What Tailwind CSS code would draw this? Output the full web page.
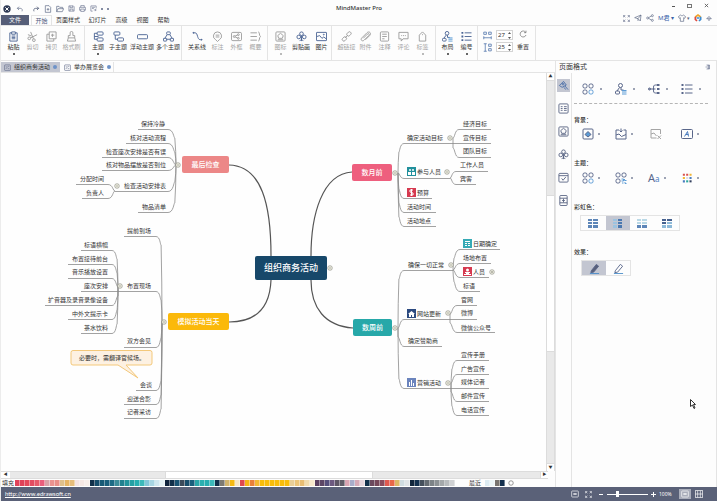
<!DOCTYPE html>
<html lang="zh-CN">
<head>
  <meta charset="UTF-8">
  <meta name="viewport" content="width=device-width, initial-scale=1.0">
  <title>MindMaster Pro</title>
  <script src="https://cdn.jsdelivr.net/npm/@tailwindcss/browser@4"></script>
</head>
<body class="bg-[#fdfdfd] fill-none stroke-2 text-[#333] text-[6px] leading-[8px] font-['Noto_Sans','Noto_Sans_CJK_SC',sans-serif]">

  <!-- Icon set -->
  <svg class="hidden">
    <symbol id="undo" viewBox="0 0 24 24"><path d="M9 5L4 10l5 5M4 10h9c5 0 7 4 5 9"/></symbol>
    <symbol id="redo" viewBox="0 0 24 24"><path d="M15 5l5 5-5 5M20 10h-9c-5 0-7 4-5 9"/></symbol>
    <symbol id="new" viewBox="0 0 24 24"><path d="M4 2h11l5 5v15H4zM12 9v8M8 13h8"/></symbol>
    <symbol id="open" viewBox="0 0 24 24"><path d="M2 20V4h7l2 3h9v4M2 20l4-9h17l-4 9z"/></symbol>
    <symbol id="save" viewBox="0 0 24 24"><path d="M3 3h15l3 3v15H3zM7 3v6h9V3M7 21v-7h10v7"/></symbol>
    <symbol id="print" viewBox="0 0 24 24"><path d="M6 8V2h12v6M6 18H2V8h20v10h-4M6 14h12v8H6z"/></symbol>
    <symbol id="export" viewBox="0 0 24 24"><path d="M9 21H3V3h18v9M7 8h10M7 12h6M13 17h8M18 14l3 3-3 4"/></symbol>
    <symbol id="paste" viewBox="0 0 24 24"><path d="M8 4H4v18h16V4h-4M8 2h8v5H8zM8 11h8M8 14h8M8 17h8"/></symbol>
    <symbol id="cut" viewBox="0 0 24 24"><circle cx="5" cy="16" r="3"/><circle cx="15" cy="20" r="3"/><path d="M8 15l14-7M14 17L8 2M2 8l8 3"/></symbol>
    <symbol id="copy" viewBox="0 0 24 24"><path d="M7 2h15v15H7zM7 7H2v15h15v-5M14 6v7M11 9h7"/></symbol>
    <symbol id="brush" viewBox="0 0 24 24"><path d="M9 10V4a3 3 0 016 0v6h4v5H5v-5zM5 15l-2 7h18l-2-7"/></symbol>
    <symbol id="topic" viewBox="0 0 24 24"><rect x="9" y="2" width="13" height="7" rx="2"/><rect x="9" y="15" width="13" height="7" rx="2"/><path d="M9 5H3v13h6M3 12h9"/></symbol>
    <symbol id="subtopic" viewBox="0 0 24 24"><rect x="2" y="2" width="13" height="7" rx="2"/><rect x="10" y="15" width="13" height="7" rx="2"/><path d="M5 9v9h5"/></symbol>
    <symbol id="float" viewBox="0 0 24 24"><rect x="1" y="8" width="22" height="9" rx="2"/></symbol>
    <symbol id="tree" viewBox="0 0 24 24"><rect x="8" y="2" width="8" height="6" rx="2"/><rect x="1" y="16" width="7" height="6" rx="1"/><rect x="16" y="16" width="7" height="6" rx="1"/><path d="M9 8l-5 8M15 8l5 8M8 18h8"/></symbol>
    <symbol id="relation" viewBox="0 0 24 24"><path d="M2 4h5c6 0 4 15 11 15h4"/><circle cx="3" cy="4" r="1"/><circle cx="21" cy="19" r="1"/></symbol>
    <symbol id="callout" viewBox="0 0 24 24"><path d="M12 2a9 9 0 014 17l-4 4-4-4a9 9 0 014-17zM8 9h8M8 13h8"/></symbol>
    <symbol id="frame" viewBox="0 0 24 24"><rect x="1" y="3" width="22" height="18" rx="3"/><circle cx="7" cy="12" r="2"/><circle cx="16" cy="8" r="2"/><circle cx="16" cy="16" r="2"/><path d="M9 11l5-2M9 13l5 2"/></symbol>
    <symbol id="summary" viewBox="0 0 24 24"><path d="M1 4h14M1 12h14M1 20h14M18 2c4 0 1 8 5 10-4 2-1 10-5 10"/></symbol>
    <symbol id="mark" viewBox="0 0 24 24"><rect x="2" y="2" width="20" height="20" rx="2"/><path d="M12 5l6 5-2 6H8l-2-6zM6 19h12"/></symbol>
    <symbol id="clip" viewBox="0 0 24 24"><circle cx="12" cy="6" r="4"/><circle cx="6" cy="13" r="4"/><circle cx="18" cy="13" r="4"/><path d="M12 10v12M8 21c3 0 4-3 4-5 0 2 1 5 4 5"/></symbol>
    <symbol id="image" viewBox="0 0 24 24"><rect x="1" y="3" width="22" height="18" rx="1"/><path d="M2 12l6-2 5 6 4-3 5 4"/><circle cx="17" cy="8" r="1"/></symbol>
    <symbol id="link" viewBox="0 0 24 24"><rect x="12" y="3" width="10" height="7" rx="3" transform="rotate(-45 17 6)"/><rect x="2" y="14" width="10" height="7" rx="3" transform="rotate(-45 7 17)"/><path d="M9 15l6-6"/></symbol>
    <symbol id="attach" viewBox="0 0 24 24"><path d="M7 16l9-9c3-3 6 0 3 3L9 20c-4 4-9-1-5-5L15 4c5-5 11 1 6 6L12 19"/></symbol>
    <symbol id="note" viewBox="0 0 24 24"><rect x="3" y="2" width="18" height="20" rx="2"/><path d="M7 7h10M7 12h10M7 17h5"/></symbol>
    <symbol id="comment" viewBox="0 0 24 24"><path d="M2 3h20v14H11l-4 5v-5H2zM7 10h2M11 10h2M15 10h2"/></symbol>
    <symbol id="tag" viewBox="0 0 24 24"><path d="M12 2l7 7v13H5V9zM12 7v2"/></symbol>
    <symbol id="layout" viewBox="0 0 24 24"><circle cx="11" cy="5" r="4"/><path d="M9 9l-5 7M12 9v5h5"/><rect x="1" y="16" width="8" height="6" rx="2"/><path stroke="#5b9bd5" d="M14 15h9M14 18h9M14 22h9"/></symbol>
    <symbol id="list" viewBox="0 0 24 24"><path d="M8 4h15M8 12h15M8 20h15"/><path stroke-width="4" d="M1 4h4M1 12h4M1 20h4"/></symbol>
    <symbol id="hspace" viewBox="0 0 24 24"><path d="M2 3h7v6H2zM15 3h7v6h-7zM2 18h20M2 14v8M22 14v8"/></symbol>
    <symbol id="vspace" viewBox="0 0 24 24"><path d="M2 2h8M6 2v20M2 22h8M15 3h7v6h-7zM15 15h7v6h-7z"/></symbol>
    <symbol id="reset" viewBox="0 0 24 24"><path d="M20 7a9 9 0 101 8M21 2v6h-6"/></symbol>
    <symbol id="full" viewBox="0 0 24 24"><path d="M2 8V2h6M16 2h6v6M22 16v6h-6M8 22H2v-6M2 2l6 6M22 2l-6 6M22 22l-6-6M2 22l6-6"/></symbol>
    <symbol id="send" viewBox="0 0 24 24"><path d="M2 11L21 3l-2 18-7-7zM12 14l9-11M12 14v7"/></symbol>
    <symbol id="share" viewBox="0 0 24 24"><circle cx="5" cy="12" r="3"/><circle cx="19" cy="5" r="3"/><circle cx="19" cy="19" r="3"/><path d="M8 11l8-5M8 13l8 5"/></symbol>
    <symbol id="shirt" viewBox="0 0 24 24"><path d="M8 3L1 8l3 5 3-2v11h10V11l3 2 3-5-7-5c-2 3-6 3-8 0z"/></symbol>
    <symbol id="shapes" viewBox="0 0 24 24"><rect x="2" y="2" width="8" height="8" rx="3"/><rect x="14" y="2" width="8" height="8" rx="3"/><rect x="2" y="14" width="8" height="8" rx="3"/><rect x="14" y="14" width="8" height="8" rx="3" stroke="#5b9bd5"/></symbol>
    <symbol id="themes" viewBox="0 0 24 24"><rect x="2" y="2" width="8" height="8" rx="3"/><rect x="14" y="2" width="8" height="8" rx="3"/><rect x="2" y="14" width="8" height="8" rx="3"/><path stroke="#5b9bd5" d="M13 14h4v4h-4M19 14v3h4M14 22h3M20 20v3h3"/></symbol>
    <symbol id="branch" viewBox="0 0 24 24"><path d="M1 12h14M22 4h-7c-4 0-4 2-4 8s0 8 4 8h7"/><circle cx="3" cy="12" r="2"/><path stroke-width="4" d="M18 4h5M18 12h5M18 20h5"/></symbol>
    <symbol id="fill" viewBox="0 0 24 24"><rect x="2" y="2" width="20" height="20" rx="2"/><path fill="#5b9bd5" d="M6 13l6-6 6 6-6 5z"/></symbol>
    <symbol id="bgimage" viewBox="0 0 24 24"><path d="M8 4H2v18h20V4h-5M2 14l6-2 5 5 9-4M12 1v7M9 5l3 3 3-3"/></symbol>
    <symbol id="noimage" viewBox="0 0 24 24"><path d="M13 20H2V3h19v9M2 12l6-2 5 6M15 15l7 7M22 15l-7 7"/></symbol>
    <symbol id="watermark" viewBox="0 0 24 24"><rect x="1" y="3" width="22" height="18" rx="2"/><path stroke="#4a7cc0" d="M7 17l6-10 2 10M10 13h5"/></symbol>
    <symbol id="palette" viewBox="0 0 24 24"><path stroke="#d9534f" stroke-width="5" d="M2 4h5M10 4h5"/><path stroke="#f2b632" stroke-width="5" d="M18 4h5M2 12h5"/><path stroke="#d8dce6" stroke-width="5" d="M10 12h5"/><path stroke="#4a7cc0" stroke-width="5" d="M18 12h5M2 20h5"/><path stroke="#2aa79b" stroke-width="5" d="M10 20h5"/><path stroke="#34405f" stroke-width="5" d="M18 20h5"/></symbol>
    <symbol id="format" viewBox="0 0 24 24"><path d="M3 12L12 3l6 8-9 5zM15 13l7 8M13 16l4 5"/><circle cx="11" cy="9" r="2"/></symbol>
    <symbol id="outline" viewBox="0 0 24 24"><rect x="2" y="2" width="20" height="20" rx="2"/><path d="M6 8h4M13 8h6M6 12h4M13 12h6M6 16h4M13 16h6"/></symbol>
    <symbol id="task" viewBox="0 0 24 24"><rect x="2" y="3" width="20" height="19" rx="2"/><path d="M2 8h20M8 14l3 4 6-7"/></symbol>
    <symbol id="book" viewBox="0 0 24 24"><rect x="4" y="1" width="16" height="22" rx="2"/><path d="M4 7h16M4 17h16M12 8v8M9 12h6"/></symbol>
    <symbol id="doc" viewBox="0 0 24 24"><rect x="2" y="3" width="20" height="19" rx="2"/><path d="M6 8l5 4-5 5M12 8h6M13 16h5"/></symbol>
    <symbol id="dock" viewBox="0 0 24 24"><path d="M6 4h12v16H6M12 4v16M15 4v16M2 12h6"/></symbol>
    <symbol id="pen" viewBox="0 0 24 24"><path d="M5 17L16 3l5 4L10 20l-6 1z"/><path stroke="#4a8cc8" d="M2 23h20"/></symbol>
    <symbol id="screen" viewBox="0 0 24 24"><rect x="2" y="3" width="20" height="18" rx="2"/><path stroke-width="4" d="M7 12h10"/></symbol>
  </svg>

  <div class="flex flex-col h-screen overflow-hidden border-l border-[#ececec]">

    <!-- Title bar -->
    <header class="relative flex h-[15px] shrink-0 items-center justify-between pl-[2px] pr-[8px] pt-[2px] text-[#5b6684]">
      <div class="flex items-center gap-[4px]">
        <svg class="mr-px size-[8px]" viewBox="0 0 24 24"><circle cx="12" cy="12" r="11" fill="#2f3a55"/><path d="M7 7l10 10M17 7L7 17" stroke="#fff" stroke-width="3"/></svg>
        <button aria-label="撤销"><svg class="mr-[4px] size-[8px] stroke-current"><use href="#undo"/></svg></button>
        <button aria-label="重做"><svg class="size-[8px] stroke-[#34405f]"><use href="#redo"/></svg></button>
        <button aria-label="新建"><svg class="size-[8px] stroke-current"><use href="#new"/></svg></button>
        <button aria-label="打开"><svg class="size-[8px] stroke-current"><use href="#open"/></svg></button>
        <button aria-label="保存"><svg class="size-[7px] stroke-current"><use href="#save"/></svg></button>
        <button aria-label="打印"><svg class="size-[7px] stroke-current"><use href="#print"/></svg></button>
        <button aria-label="导出"><svg class="size-[7px] stroke-current"><use href="#export"/></svg></button>
        <span class="size-[2px] rounded-full bg-[#5b6684]"></span>
        <span class="size-[2px] rounded-full bg-[#5b6684]"></span>
      </div>
      <h1 class="absolute inset-x-0 top-[4px] text-center font-medium text-[#333]">MindMaster Pro</h1>
      <div class="relative flex items-center gap-[12px] pb-[6px]">
        <button aria-label="最小化" class="mt-[2px] h-px w-[3px] bg-[#555]"></button>
        <button aria-label="最大化" class="h-[4px] w-[5px] border border-[#777]"></button>
        <button aria-label="关闭"><svg class="size-[5px] stroke-[#555] stroke-1" viewBox="0 0 6 6"><path d="M1 1l4 4M5 1L1 5"/></svg></button>
      </div>
    </header>

    <!-- Menu tabs -->
    <nav class="flex h-[11px] shrink-0 items-stretch border-b border-[#e4e4e4]">
      <button class="w-[28px] bg-[#565e78] text-white">文件</button>
      <button class="ml-[2px] w-[21px] border-x border-t border-[#e4e4e4] text-[#4e5a7c]">开始</button>
      <button class="w-[32px]">页面样式</button>
      <button class="w-[27px]">幻灯片</button>
      <button class="w-[21px]">高级</button>
      <button class="w-[21px]">视图</button>
      <button class="w-[21px]">帮助</button>
      <div class="ml-auto flex items-center gap-[4px] pr-[5px] pb-[4px] text-[#5b6684]">
        <button aria-label="全屏"><svg class="size-[7px] stroke-current"><use href="#full"/></svg></button>
        <button aria-label="发送"><svg class="size-[8px] stroke-current"><use href="#send"/></svg></button>
        <button aria-label="分享"><svg class="size-[8px] stroke-current"><use href="#share"/></svg></button>
        <button class="text-[#3a62a8]">M君 ▾</button>
        <button aria-label="皮肤" class="flex"><svg class="size-[8px] stroke-current"><use href="#shirt"/></svg><span class="ml-px text-[5px] leading-[8px]">▾</span></button>
        <svg class="size-[8px]" viewBox="0 0 24 24" stroke-width="5"><path stroke="#f0a52c" d="M4 9l8-6 8 6"/><path stroke="#df4a3e" d="M4 8v8l5 5"/><path stroke="#3c8bd0" d="M20 8v8l-5 5M8 12h8"/></svg>
        <button aria-label="折叠"><svg class="size-[6px] stroke-current" viewBox="0 0 24 24" stroke-width="3"><path d="M3 15l9-9 9 9zM8 20h8"/></svg></button>
      </div>
    </nav>

    <!-- Ribbon -->
    <div id="ribbon" class="flex h-[35px] shrink-0 border-b border-[#e4e4e4]"></div>

    <div class="flex min-h-0 flex-1">
      <main class="flex min-w-0 flex-1 flex-col">
        <!-- Open documents -->
        <div class="flex h-[12px] shrink-0 items-stretch border-b border-[#e4e4e4] pt-px">
          <button class="flex w-[59px] items-center gap-[3px] bg-[#c3c6d1] pl-[3px]"><svg class="size-[7px] stroke-[#5b6684]"><use href="#doc"/></svg>组织商务活动<span class="size-[4px] rounded-full bg-[#6e93c8]"></span></button>
          <button class="flex w-[54px] items-center gap-[3px] border-r border-[#e4e4e4] pl-[4px]"><svg class="size-[7px] stroke-[#5b6684]"><use href="#doc"/></svg>举办展览会<span class="size-[4px] rounded-full bg-[#6e93c8]"></span></button>
        </div>

        <div class="flex min-h-0 flex-1">
          <!-- Mind map canvas -->
          <div id="canvas" class="relative min-w-0 flex-1 overflow-hidden bg-[#fefefe]">
            <svg id="lines" class="absolute inset-0 h-full w-full"></svg>
          </div>
          <!-- Vertical scrollbar -->
          <div class="flex w-[9px] shrink-0 flex-col border-x border-[#dcdcdc] bg-[#e9e9e9]">
            <button aria-label="向上" class="h-[8px] border-b border-[#dcdcdc] bg-white text-[4px] leading-[6px]">▲</button>
            <div class="grow-[115]"></div>
            <div class="grow-[156] border-y border-[#dcdcdc] bg-white"></div>
            <div class="grow-[112]"></div>
            <button aria-label="向下" class="h-[8px] border-t border-[#dcdcdc] bg-white text-[4px] leading-[6px]">▼</button>
          </div>
        </div>

        <!-- Horizontal scrollbar -->
        <div class="mr-[7px] flex h-[8px] shrink-0 border-y border-[#dcdcdc] bg-[#e9e9e9]">
          <button aria-label="向左" class="w-[9px] bg-white text-[4px] leading-[6px]">◀</button>
          <div class="grow-[156]"></div>
          <div class="grow-[206] border-x border-[#dcdcdc] bg-white"></div>
          <div class="grow-[168]"></div>
          <button aria-label="向右" class="w-[8px] border-l border-[#dcdcdc] bg-white text-[4px] leading-[6px]">▶</button>
        </div>

        <!-- Colour strip -->
        <div class="flex h-[8px] shrink-0 items-center pl-px">
          <span class="w-[13px]">填充</span>
          <div id="swatches" class="flex h-[6px]"></div>
          <span class="ml-[14px] w-[16px]">最近</span>
          <div id="recent" class="flex h-[6px]"></div>
          <svg class="ml-[3px] size-[6px] stroke-[#777]" viewBox="0 0 24 24" stroke-width="3"><circle cx="12" cy="12" r="9"/></svg>
        </div>
      </main>

      <!-- Page format panel -->
      <aside class="flex w-[162px] shrink-0 flex-col border-x border-[#e4e4e4]">
        <div class="flex h-[12px] items-center justify-between pl-[3px] pr-[5px]">
          <h2 class="text-[7px]">页面格式</h2>
          <button aria-label="停靠"><svg class="size-[6px] stroke-[#4e5a7c]"><use href="#dock"/></svg></button>
        </div>
        <div class="flex flex-1">
          <div class="flex w-[16px] flex-col items-center gap-[10px] border-r border-[#e4e4e4] pt-[6px] text-[#5b6684]">
            <button aria-label="页面格式" class="flex size-[13px] items-center justify-center bg-[#c3c6d1]"><svg class="size-[11px] stroke-[#4a6fa8]"><use href="#format"/></svg></button>
            <button aria-label="大纲" class="flex size-[13px] items-center justify-center"><svg class="size-[11px] stroke-current"><use href="#outline"/></svg></button>
            <button aria-label="图标" class="flex size-[13px] items-center justify-center"><svg class="size-[11px] stroke-current"><use href="#mark"/></svg></button>
            <button aria-label="剪贴画" class="flex size-[13px] items-center justify-center"><svg class="size-[11px] stroke-current"><use href="#clip"/></svg></button>
            <button aria-label="任务" class="flex size-[13px] items-center justify-center"><svg class="size-[11px] stroke-current"><use href="#task"/></svg></button>
            <button aria-label="符号" class="flex size-[13px] items-center justify-center"><svg class="size-[11px] stroke-current"><use href="#book"/></svg></button>
          </div>
          <div class="flex-1 pl-[2px] pr-[2px] pt-[10px] text-[#59668a]">
            <div class="grid h-[20px] grid-cols-4 pl-[8px]">
              <button aria-label="形状" class="flex gap-[6px]"><svg class="size-[12px] stroke-current"><use href="#shapes"/></svg><i class="mt-[5px] size-[2px] rounded-full bg-[#7d859b]"></i></button>
              <button aria-label="布局" class="flex gap-[6px]"><svg class="size-[12px] stroke-current"><use href="#layout"/></svg><i class="mt-[5px] size-[2px] rounded-full bg-[#7d859b]"></i></button>
              <button aria-label="分支" class="flex gap-[6px]"><svg class="size-[12px] stroke-current"><use href="#branch"/></svg><i class="mt-[5px] size-[2px] rounded-full bg-[#7d859b]"></i></button>
              <button aria-label="编号" class="flex gap-[6px]"><svg class="size-[12px] stroke-current"><use href="#list"/></svg><i class="mt-[5px] size-[2px] rounded-full bg-[#7d859b]"></i></button>
            </div>
            <div class="mr-[6px] border-t border-dashed border-[#b5b5b5]"></div>

            <h3 class="mt-[12px] font-medium text-[#333]">背景：</h3>
            <div class="mt-[4px] grid grid-cols-4 pl-[8px]">
              <button aria-label="背景颜色" class="flex gap-[4px]"><svg class="size-[12px] stroke-current"><use href="#fill"/></svg><i class="mt-[5px] size-[2px] rounded-full bg-[#7d859b]"></i></button>
              <button aria-label="背景图片" class="flex gap-[4px]"><svg class="size-[12px] stroke-current"><use href="#bgimage"/></svg><i class="mt-[5px] size-[2px] rounded-full bg-[#7d859b]"></i></button>
              <button aria-label="移除图片" class="flex pl-[2px] text-[#a5a5a5]"><svg class="size-[12px] stroke-current"><use href="#noimage"/></svg></button>
              <button aria-label="水印" class="flex gap-[4px]"><svg class="size-[12px] stroke-current"><use href="#watermark"/></svg><i class="mt-[5px] size-[2px] rounded-full bg-[#7d859b]"></i></button>
            </div>

            <h3 class="mt-[19px] font-medium text-[#333]">主题：</h3>
            <div class="mt-[5px] grid grid-cols-4 pl-[8px]">
              <button aria-label="主题样式" class="flex gap-[4px]"><svg class="size-[12px] stroke-current"><use href="#shapes"/></svg><i class="mt-[5px] size-[2px] rounded-full bg-[#7d859b]"></i></button>
              <button aria-label="主题颜色" class="flex gap-[4px]"><svg class="size-[12px] stroke-current"><use href="#themes"/></svg><i class="mt-[5px] size-[2px] rounded-full bg-[#7d859b]"></i></button>
              <button aria-label="主题字体" class="flex gap-[4px]"><span class="text-[11px] leading-[12px]">A<span class="text-[8px] text-[#4a7cc0]">a</span></span><i class="mt-[5px] size-[2px] rounded-full bg-[#7d859b]"></i></button>
              <button aria-label="配色" class="flex gap-[5px] pl-px"><svg class="mt-px size-[10px]"><use href="#palette"/></svg><i class="mt-[5px] size-[2px] rounded-full bg-[#7d859b]"></i></button>
            </div>

            <h3 class="mt-[18px] font-medium text-[#333]">彩虹色：</h3>
            <div class="ml-[6px] mt-[4px] flex h-[16px] w-[100px] border border-[#e4e4e4]">
              <button aria-label="彩虹色 1" class="flex flex-1 items-center justify-center"><svg class="h-[9px] w-[10px]" viewBox="0 0 10 9" fill="#5d86b8"><path fill="#5d86b8" d="M0 0h4v2H0zM5 0h5v2H5zM0 3h4v2H0zM5 3h5v2H5zM0 6h4v3H0zM5 6h5v3H5z"/></svg></button>
              <button aria-label="彩虹色 2" class="flex flex-1 items-center justify-center bg-[#c3c6d1]"><svg class="h-[9px] w-[10px]" viewBox="0 0 10 9"><path fill="#9cc3e0" d="M0 0h4v2H0zM0 3h4v2H0zM0 6h4v3H0z"/><path fill="#4a78b0" d="M5 0h4v2H5zM5 3h4v2H5zM5 6h4v3H5z"/></svg></button>
              <button aria-label="彩虹色 3" class="flex flex-1 items-center justify-center"><svg class="h-[9px] w-[10px]" viewBox="0 0 10 9"><path fill="#b9d8e6" d="M0 0h4v2H0zM5 0h5v2H5zM0 3h4v2H0zM5 3h5v2H5z"/><path fill="#5d86b8" d="M0 6h4v3H0zM5 6h5v3H5z"/></svg></button>
              <button aria-label="彩虹色 4" class="flex flex-1 items-center justify-center"><svg class="h-[9px] w-[10px]" viewBox="0 0 10 9"><path fill="#46618f" d="M0 0h4v2H0zM5 0h5v2H5zM0 3h4v2H0z"/><path fill="#8db9d8" d="M5 3h5v2H5zM0 6h4v3H0zM5 6h5v3H5z"/></svg></button>
            </div>

            <h3 class="mt-[17px] font-medium text-[#333]">效果：</h3>
            <div class="ml-[7px] mt-[4px] flex h-[16px] w-[50px] border border-[#e4e4e4]">
              <button aria-label="普通" class="flex flex-1 items-center justify-center bg-[#c3c6d1]"><svg class="size-[11px] fill-[#59607a] stroke-current"><use href="#pen"/></svg></button>
              <button aria-label="手绘" class="flex flex-1 items-center justify-center"><svg class="size-[11px] stroke-current"><use href="#pen"/></svg></button>
            </div>
          </div>
        </div>
      </aside>
    </div>

    <!-- Status bar -->
    <footer class="flex h-[14px] shrink-0 items-center justify-between bg-[#5a6178] pl-[4px] pr-[14px] text-white">
      <a href="http://www.edrawsoft.cn" class="font-['Lato',sans-serif] underline">http://www.edrawsoft.cn</a>
      <div class="flex items-center">
        <button aria-label="演示"><svg class="size-[8px] stroke-white"><use href="#screen"/></svg></button>
        <button aria-label="全屏" class="ml-[6px]"><svg class="size-[7px] stroke-white"><use href="#full"/></svg></button>
        <button aria-label="缩小" class="ml-[7px] h-px w-[4px] bg-white"></button>
        <input type="range" aria-label="缩放" min="0" max="100" value="24" class="ml-[4px] h-[7px] w-[41px] appearance-none bg-linear-to-r from-white to-white bg-[length:100%_1px] bg-center bg-no-repeat [&::-webkit-slider-thumb]:h-[6px] [&::-webkit-slider-thumb]:w-[3px] [&::-webkit-slider-thumb]:appearance-none [&::-webkit-slider-thumb]:bg-white">
        <button aria-label="放大" class="ml-[3px]"><svg class="size-[5px] stroke-white stroke-1" viewBox="0 0 5 5"><path d="M0 2.5h5M2.5 0v5"/></svg></button>
        <span class="ml-[3px] w-[20px] text-[5px]">100%</span>
        <button aria-label="适合页面" class="flex h-[10px] w-[12px] items-center justify-center bg-[#a9adba]"><svg class="size-[8px] stroke-white"><use href="#screen"/></svg></button>
        <button aria-label="适合窗口" class="ml-[4px]"><svg class="size-[8px] stroke-white" viewBox="0 0 24 24"><rect x="1" y="2" width="22" height="20"/><path d="M8 2v20M16 2v20M1 12h22"/></svg></button>
      </div>
    </footer>
  </div>

  <svg class="pointer-events-none absolute left-[690px] top-[399px] h-[10px] w-[6px]" viewBox="0 0 12 20"><path d="M1 1v14l4-3 3 7 2-1-3-7h4z" fill="#fff" stroke="#333" stroke-width="2"/></svg>

  <script>
    // Ribbon groups: [icon, label, width class, enabled, has drop-down]
    const groups = [
      ['w-[84px] pl-[3px]', [['paste', '粘贴', 'w-[19px]', 1, 1], ['cut', '剪切', 'w-[19px]', 0, 0], ['copy', '拷贝', 'w-[19px]', 0, 0], ['brush', '格式刷', 'w-[21px]', 0, 0]]],
      ['w-[97px] pl-[4px]', [['topic', '主题', 'w-[18px]', 1, 1], ['subtopic', '子主题', 'w-[22px]', 1, 0], ['float', '浮动主题', 'w-[26px]', 1, 0], ['tree', '多个主题', 'w-[26px]', 1, 0]]],
      ['w-[86px] pl-[4px]', [['relation', '关系线', 'w-[22px]', 1, 0], ['callout', '标注', 'w-[19px]', 0, 0], ['frame', '外框', 'w-[19px]', 0, 0], ['summary', '概要', 'w-[19px]', 0, 0]]],
      ['w-[64px] pl-[3px]', [['mark', '图标', 'w-[19px]', 0, 1], ['clip', '剪贴画', 'w-[22px]', 1, 0], ['image', '图片', 'w-[19px]', 1, 0]]],
      ['w-[104px] pl-[5px]', [['link', '超链接', 'w-[19px]', 0, 0], ['attach', '附件', 'w-[19px]', 0, 0], ['note', '注释', 'w-[19px]', 0, 0], ['comment', '评论', 'w-[19px]', 0, 0], ['tag', '标签', 'w-[19px]', 0, 1]]],
      ['w-[42px] pl-[2px]', [['layout', '布局', 'w-[19px]', 1, 1], ['list', '编号', 'w-[19px]', 1, 1]]]
    ];
    const spin = (icon, label, value) => `
      <label class="flex items-center gap-[4px]"><svg class="size-[9px] stroke-[#4a6fa8]"><use href="#${icon}"/></svg>
        <span class="flex h-[10px] w-[17px] items-center border border-[#d4d4d4] bg-white"><input type="text" aria-label="${label}" value="${value}" class="w-[11px] pl-px text-[6px] leading-[8px]">
        <svg class="h-[7px] w-[3px]" viewBox="0 0 3 7"><path fill="#555" d="M0 2l1.500-2L3 2zM0 5h3L1.500 7z"/></svg></span></label>`;
    document.getElementById('ribbon').innerHTML = groups.map(([cls, items]) => `
      <div class="flex shrink-0 border-r border-[#e4e4e4] pt-[5px] ${cls}">${items.map(([icon, text, w, on, drop]) => `
        <button class="flex flex-col items-center whitespace-nowrap ${w} ${on ? 'text-[#333]' : 'text-[#a3a3a3]'}">
          <svg class="size-[11px] ${on ? 'stroke-[#4a6494]' : 'stroke-[#9b9b9b]'}"><use href="#${icon}"/></svg>
          <span class="mt-px">${text}</span>${drop ? '<i class="mt-[2px] size-[2px] rounded-full bg-current"></i>' : ''}
        </button>`).join('')}</div>`).join('') + `
      <div class="flex w-[58px] shrink-0 border-r border-[#e4e4e4] pl-[5px]">
        <div class="flex flex-col gap-[2px] pt-[4px]">${spin('hspace', '水平间距', 27)}${spin('vspace', '垂直间距', 25)}</div>
        <button class="flex w-[20px] flex-col items-center gap-[5px] pt-[4px]"><svg class="size-[8px] stroke-[#666]"><use href="#reset"/></svg>重置</button>
      </div>`;

    // Colour strip
    const colors = 'e0435a e0435a e5495c e24d62 e65a6b ea5f7d d9a2a8 ea9390 e98f88 e0c08c e7b565 e6bd7c f4e3e3 f6e8e4 f8eeea 12304a 174d6b 185a76 1a5f7c 1d6b85 3c8c99 22818f 23949c 25a0a4 27aeb0 3db9ba 84c6d8 a8d5e2 cfe6ee e4f1f4 10243c 12304a 1a5372 3b4a5a 174d6b 1a5f7c 2aa6a8 2bb0b0 27aeb0 3db9ba 12304a 7d7a72 d2b46c f6b912 f7e6c4 e0494e f6b515 e8803a f3b932 f9bd0c f9bd0c f9bd0c f9bd0c f9bd0c f9bd0c e9cf98 ecc57a e8be74 f1dcae f7e9cc 5a4060 5d4766 57507c 6d5a80 5f5766 625e68 dba6b3 a9adca d6a9b6 e5d5dc 12304a 6b4a5e 76485a 8a4b5c e0594f e86848 dcb865 cfdbe0 dfe3e6 12263c 14304e 46505c 666c72 7d8387 8c9194 a4a8aa b8bbbd cfd1d3'.split(' ');
    const swatch = c => `<button aria-label="#${c}" class="w-[5px] border-r border-white/40" style="background:#${c}"></button>`;
    document.getElementById('swatches').innerHTML = colors.map(swatch).join('');
    document.getElementById('recent').innerHTML = ['dcebf2', 'eaf4f7', '77736f', '14304e'].map(swatch).join('');

    // Canvas coordinates are window based, the canvas starts at this offset
    const OX = 1, OY = 73;
    const canvas = document.getElementById('canvas');
    const lines = document.getElementById('lines');
    let svg = '', html = '';

    // Topics: [text, text x, text centre y, line y, line outer x, icon]
    // Each branch: [join x, join y, end of straight line x, topics]
    const branches = [
      [176, 165, 168, [['保持冷静', 141, 124, 129, 138], ['核对活动流程', 130, 138, 143, 126], ['检查座次安排是否有误', 106, 152, 157, 102], ['核对物品摆放是否到位', 106, 165, 170, 102], ['检查活动安排表', 124, 186, 191, 115], ['物品清单', 142, 207, 212, 138]]],
      [115, 191, 108, [['分配时间', 80, 179, 184, 76], ['负责人', 86, 193, 198, 82]]],
      [162, 321, 156, [['提前到场', 127, 231, 236, 124], ['布置现场', 127, 286, 291, 118], ['双方会见', 127, 341, 347, 124], ['会谈', 140, 385, 390, 136], ['迎送合影', 127, 399, 404, 124], ['记者采访', 127, 412, 418, 124]]],
      [118, 291, 112, [['标语横幅', 84, 245, 250, 81], ['布置接待前台', 72, 259, 264, 68], ['音乐播放设置', 72, 272, 278, 68], ['座次安排', 84, 286, 291, 81], ['扩音器及录音录像设备', 48, 300, 305, 45], ['中外文提示卡', 72, 314, 319, 68], ['茶水饮料', 84, 328, 333, 81]]],
      [398, 173, 404, [['确定活动目标', 407, 138, 143, 453], ['参与人员', 417, 172, 178, 450, 'people'], ['预算', 417, 193, 198, 432, 'money'], ['活动时间', 407, 207, 212, 436], ['活动地点', 407, 221, 226, 436]]],
      [453, 143, 459, [['经济目标', 463, 124, 129, 491], ['宣传目标', 463, 138, 143, 491], ['团队目标', 463, 151, 157, 491]]],
      [450, 178, 456, [['工作人员', 460, 165, 171, 488], ['宾客', 460, 179, 184, 476]]],
      [398, 328, 404, [['确保一切正常', 408, 265, 270, 453], ['网站更新', 417, 314, 319, 450, 'home'], ['确定赞助商', 408, 341, 346, 442], ['营销活动', 417, 383, 388, 451, 'chart']]],
      [453, 270, 460, [['日期确定', 473, 244, 249, 500, 'calendar'], ['场地布置', 463, 258, 263, 491], ['人员', 473, 272, 277, 489, 'person'], ['标语', 463, 286, 291, 480]]],
      [450, 319, 457, [['官网', 461, 300, 305, 477], ['微博', 461, 313, 319, 477], ['微信公众号', 461, 328, 332, 495]]],
      [451, 388, 457, [['宣传手册', 461, 355, 360, 489], ['广告宣传', 461, 369, 374, 489], ['媒体记者', 461, 382, 388, 489], ['邮件宣传', 461, 396, 401, 489], ['电话宣传', 461, 410, 415, 489]]]
    ];
    const icons = {
      people: ['#22909c', '<circle cx="3" cy="3" r="1"/><circle cx="6" cy="3" r="1"/><path d="M1 8V5h3v3zM5 8V5h3v3z"/>'],
      money: ['#d63a50', '<path d="M6 2H3v2l3 1v2H3M4.500 1v7" fill="none" stroke="#fff" stroke-width="1"/>'],
      home: ['#2c4a80', '<path d="M1 5l3.500-3L8 5H7v3H5V6H4v2H2V5z"/>'],
      chart: ['#6b84bd', '<path d="M2 4h1v4H2zM4 2h1v6H4zM6 5h1v3H6z"/>'],
      calendar: ['#36aab5', '<path d="M2 2h5v1H2zM2 4h2v1H2zM5 4h2v1H5zM2 6h2v1H2zM5 6h2v1H5z"/>'],
      person: ['#d63a50', '<circle cx="4.500" cy="3" r="1.500"/><path d="M2 5h5v1H6v1h2v1H1V7h2V6H2z"/>']
    };
    branches.forEach(([jx, jy, sx, topics]) => topics.forEach(([text, tx, cy, ly, ox, icon]) => {
      const dy = Math.abs(jy - ly), r = Math.min(9, dy) * Math.sign(jy - ly);
      const mid = sx + (jx - sx) * 0.7;
      svg += dy < 1
        ? `<path d="M${ox} ${ly}.500H${jx}"/>`
        : `<path d="M${ox} ${ly}.500H${sx}C${mid} ${ly}.500 ${mid} ${ly + r} ${dy > 20 ? (jx + mid) / 2 : jx} ${ly + r}Q${jx} ${(ly + r + jy) / 2} ${jx} ${jy}"/>`;
      html += `<span class="absolute whitespace-nowrap leading-[8px]" style="left:${tx - OX}px;top:${cy - 4 - OY}px">${text}</span>`;
      if (icon) html += `<svg class="absolute size-[9px] fill-white" viewBox="0 0 9 9" style="left:${tx - 10 - OX}px;top:${cy - 5 - OY}px"><rect width="9" height="9" fill="${icons[icon][0]}"/>${icons[icon][1]}</svg>`;
    }));

    // Links from the central topic
    const links = ['M229 165C262 166 271 205 271 256', 'M229 322C258 322 270 305 271 280', 'M352 172C322 174 311 215 311 256', 'M353 328C325 326 311 308 311 280'];
    const callout = '<path d="M73 350.500H150a2 2 0 012 2V363a2 2 0 01-2 2H126L138 378 118 365H73a2 2 0 01-2-2V352.500a2 2 0 012-2z" fill="#fdf1e2" stroke="#f3c87a" stroke-width="1"/>';
    const toggles = [[178, 165], [117, 186], [164, 322], [120, 286], [330, 268], [395, 173], [450, 138], [447, 172], [395, 328], [451, 265], [448, 313], [448, 383], [492, 272, 1]];
    lines.innerHTML = `<g transform="translate(${-OX} ${-OY})"><g stroke="#8a8a8a" stroke-width="0.800">${svg}</g>
      <g stroke="#555" stroke-width="1.200">${links.map(d => `<path d="${d}"/>`).join('')}</g>${callout}
      ${toggles.map(([x, y, plus]) => `<g stroke="#85857a" stroke-width="0.600"><circle cx="${x}" cy="${y}" r="2.300" fill="#f1f1e4"/><path d="M${x - 1} ${y}h2${plus ? `M${x} ${y - 1}v2` : ''}"/></g>`).join('')}</g>`;

    // Main topics: [text, x, y, w, h, classes]
    const mains = [
      ['组织商务活动', 255, 256, 72, 24, 'bg-[#17486a] text-[9px]'],
      ['最后检查', 182, 156, 47, 17, 'bg-[#ec8787] text-[7px]'],
      ['模拟活动当天', 168, 313, 61, 17, 'bg-[#fbb90a] text-[7px]'],
      ['数月前', 352, 164, 40, 17, 'bg-[#ee5f7e] text-[7px]'],
      ['数周前', 353, 319, 39, 17, 'bg-[#27a8a9] text-[7px]']
    ];
    html += mains.map(([t, x, y, w, h, cls]) => `<div class="absolute flex items-center justify-center whitespace-nowrap rounded-[2px] font-medium text-white ${cls}" style="left:${x - OX}px;top:${y - OY}px;width:${w}px;height:${h}px">${t}</div>`).join('');
    html += `<span class="absolute whitespace-nowrap leading-[8px]" style="left:${79 - OX}px;top:${354 - OY}px">必要时，需翻译官候场。</span>`;
    canvas.insertAdjacentHTML('beforeend', html);
  </script>
</body>
</html>
